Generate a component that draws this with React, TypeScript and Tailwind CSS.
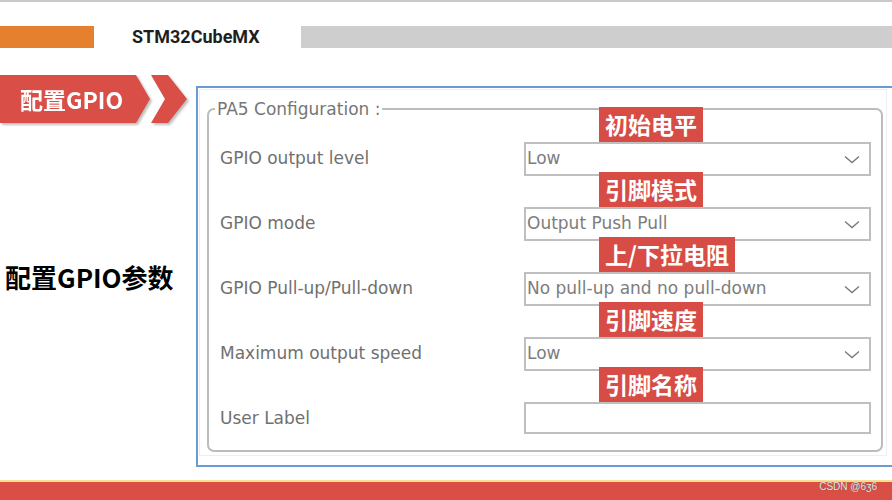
import React from 'react';

type Row = {
  label: string;
  value?: string;
  tag: string;
  kind: 'select' | 'input';
};

const rows: Row[] = [
  { label: 'GPIO output level', value: 'Low', tag: '初始电平', kind: 'select' },
  { label: 'GPIO mode', value: 'Output Push Pull', tag: '引脚模式', kind: 'select' },
  { label: 'GPIO Pull-up/Pull-down', value: 'No pull-up and no pull-down', tag: '上/下拉电阻', kind: 'select' },
  { label: 'Maximum output speed', value: 'Low', tag: '引脚速度', kind: 'select' },
  { label: 'User Label', tag: '引脚名称', kind: 'input' },
];

const cjk = "font-['Noto_Sans_CJK_SC','Noto_Sans',sans-serif]";

function Chevron() {
  return (
    <svg width="16" height="9" viewBox="0 0 16 9" className="shrink-0">
      <polyline points="1,1.5 8,7.5 15,1.5" fill="none" stroke="#7a7a7a" strokeWidth="1.4" />
    </svg>
  );
}

export default function App() {
  return (
    <div className="flex h-[500px] w-[892px] flex-col overflow-hidden bg-white">
      <div className="h-[2px] bg-[#c9c9c9]" />

      {/* header strip */}
      <div className="mt-[24px] flex h-[22px] items-center">
        <div className="h-full w-[94px] bg-[#e5802e]" />
        <div className="w-[207px] pl-[38px] font-['Roboto',sans-serif] text-[18px] font-bold leading-none text-[#1f1f1f]">
          STM32CubeMX
        </div>
        <div className="h-full flex-1 bg-[#cfcecf]" />
      </div>

      <div className="flex items-start">
        {/* left column */}
        <div className="w-[196px] shrink-0 pt-[27px]">
          <div className="flex items-center drop-shadow-[2px_2px_1px_rgba(0,0,0,0.25)]">
            <div
              className={`flex h-[48px] w-[150px] items-center pl-[20px] text-[23px] font-bold text-white [clip-path:polygon(0_0,136px_0,150px_50%,136px_100%,0_100%)] bg-[#d94e47] ${cjk}`}
            >
              配置GPIO
            </div>
            <div className="ml-[1px] h-[48px] w-[36px] bg-[#d94e47] [clip-path:polygon(0_0,17px_0,36px_50%,17px_100%,0_100%,14px_50%)]" />
          </div>
          <div className={`mt-[136px] pl-[5px] text-[26px] font-bold leading-[36px] text-black ${cjk}`}>
            配置GPIO参数
          </div>
        </div>

        {/* screenshot panel */}
        <div className="mt-[38px] h-[381px] flex-1 border-y-2 border-l-2 border-[#6b9bd7] pl-[1px] pr-[5px] pt-[1px]">
          <div className="h-[367px] border border-[#eeeeee] pl-[7px] pr-[3px] pt-[9px] pb-[3px]">
            <fieldset className="flex h-[353px] flex-col rounded-[7px] border-2 border-[#bcbcbc] pl-[11px] pr-[10px] font-['DejaVu_Sans',sans-serif]">
              <legend className="-ml-[5px] px-[2px] text-[17px] leading-[20px] text-[#767676]">
                PA5 Configuration :
              </legend>
              <div className="mt-[23px] flex flex-col gap-[31px]">
                {rows.map((row) => (
                  <div key={row.label} className="flex h-[34px] items-center">
                    <div className="w-[304px] shrink-0 text-[17px] text-[#707070]">{row.label}</div>
                    <div
                      className={`relative flex flex-1 items-center justify-between border-2 border-[#bfbfbf] pl-[1px] pr-[9px] ${
                        row.kind === 'input' ? 'h-[32px] self-start' : 'h-[34px]'
                      }`}
                    >
                      <span className="text-[17px] text-[#7d7d7d]">{row.value}</span>
                      {row.kind === 'select' && <Chevron />}
                      <div
                        className={`absolute left-[73px] top-[-37px] flex h-[35px] items-center bg-[#d84c46] px-[6px] text-[23px] font-bold text-white ${cjk}`}
                      >
                        {row.tag}
                      </div>
                    </div>
                  </div>
                ))}
              </div>
            </fieldset>
          </div>
        </div>
      </div>

      <div className="mt-auto h-[2px] bg-[#f7df8e]" />
      <div className="flex h-[18px] justify-end bg-[#d94f46] pr-[15px]">
        <span className="-mt-[1px] font-['Liberation_Sans',sans-serif] text-[10px] leading-[12px] text-[#e6e6e6] [text-shadow:0_0_1px_#555]">
          CSDN @6ʒ6
        </span>
      </div>
    </div>
  );
}
